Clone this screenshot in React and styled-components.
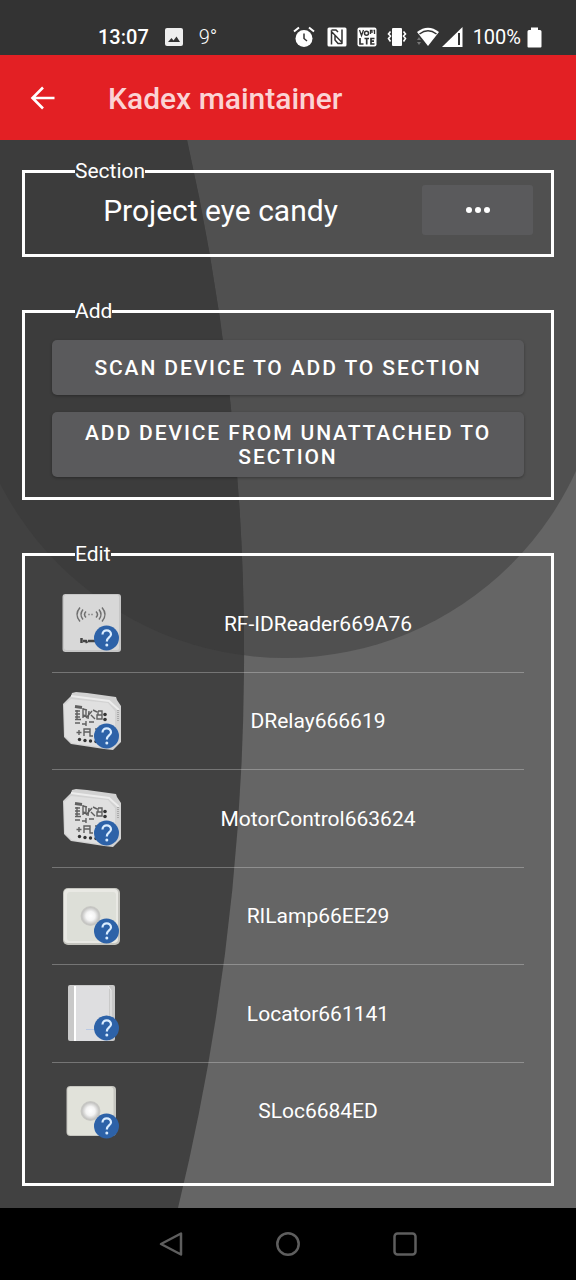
import React from 'react'
import styled, {createGlobalStyle} from 'styled-components'

const GlobalStyle = createGlobalStyle`
  * {
    box-sizing: border-box;
  }

  body {
    margin: 0;
    background: #000;
    color: #fff;
    font-family: Roboto, sans-serif;
  }

  button {
    font-family: inherit;
    color: inherit;
    border: 0;
    padding: 0;
    cursor: pointer;
  }

  svg {
    display: block;
    flex: none;
  }
`

const Page = styled.div`
  min-height: 100vh;
  display: flex;
  flex-direction: column;
`

const StatusBar = styled.div`
  display: flex;
  align-items: center;
  justify-content: space-between;
  height: 55px;
  padding: 19px 34px 0 98px;
  background: #333;
  font-size: 20px;
  line-height: 24px;
`

const StatusGroup = styled.div`
  display: flex;
  align-items: center;
  gap: ${props => props.$gap}px;
`

const Clock = styled.span`
  font-weight: 500;
`

const Temperature = styled.span`
  font-weight: 300;
`

const Header = styled.header`
  display: flex;
  align-items: center;
  gap: 50px;
  height: 85px;
  padding: 0 26px;
  background: #e32024;
`

const BackButton = styled.button`
  background: none;
`

const Title = styled.h1`
  margin: 0;
  padding-top: 2px;
  font-size: 30px;
  line-height: 36px;
  font-weight: 500;
  color: #fbd3d4;
`

const Main = styled.main`
  position: relative;
  flex: 1;
  display: flex;
  flex-direction: column;
  gap: 42px;
  padding: 19px 22px 22px;
  background: #656565;
`

const Backdrop = styled.svg`
  position: absolute;
  inset: 0;
  width: 100%;
  height: 100%;
`

const Group = styled.fieldset`
  position: relative;
  min-width: 0;
  margin: 0;
  padding: ${props => props.$pad};
  border: 3px solid #fff;
`

const Legend = styled.legend`
  margin-left: ${props => props.$indent}px;
  padding: 0;
  font-size: 21px;
  line-height: 24px;
`

const SectionRow = styled.div`
  display: flex;
  align-items: center;
  gap: 24px;
`

const SectionName = styled.div`
  flex: 1;
  padding-top: 2px;
  text-align: center;
  font-size: 30px;
  line-height: 36px;
`

const MoreButton = styled.button`
  display: flex;
  align-items: center;
  justify-content: center;
  width: 111px;
  height: 50px;
  border-radius: 3px;
  background: #5a5a5c;
`

const Actions = styled.div`
  display: flex;
  flex-direction: column;
  gap: 17px;
`

const ActionButton = styled.button`
  padding: 9px 24px 8px;
  min-height: 55px;
  border-radius: 5px;
  background: #5a5a5c;
  box-shadow: 0 1px 3px rgba(0, 0, 0, 0.3);
  font-size: 21px;
  line-height: 24px;
  font-weight: 500;
  letter-spacing: 0.09em;
  text-transform: uppercase;
`

const DeviceList = styled.ul`
  display: grid;
  grid-template-rows: repeat(6, 1fr);
  height: 585px;
  margin: 0;
  padding: 0;
  list-style: none;
`

const Device = styled.li`
  display: flex;
  align-items: center;
  padding: 0 10px;
  border-bottom: 1px solid rgba(255, 255, 255, 0.28);

  &:last-child {
    border-bottom-color: transparent;
  }
`

const DeviceName = styled.span`
  flex: 1;
  padding-top: 1px;
  text-align: center;
  font-size: 21px;
  line-height: 24px;
`

const NavBar = styled.nav`
  display: flex;
  align-items: center;
  justify-content: center;
  gap: 93px;
  height: 72px;
  background: #000;
`

const NavButton = styled.button`
  background: none;
`

const Background = () => (
  <Backdrop viewBox="0 0 576 1068" preserveAspectRatio="none" aria-hidden="true">
    <clipPath id="arc">
      <path d="M-35 0H605V198A320 320 0 0 1 -35 198Z" />
    </clipPath>
    <path d="M-35 0H605V198A320 320 0 0 1 -35 198Z" fill="#505050" />
    <path d="M0 0H187A2350 2350 0 0 1 178 1068H0Z" fill="#414141" />
    <path d="M0 0H187A2350 2350 0 0 1 178 1068H0Z" fill="#3c3c3c" clipPath="url(#arc)" />
  </Backdrop>
)

const StatusIcons = () => (
  <>
    <svg width="24" height="22" viewBox="0 0 24 22" fill="none" stroke="#fff">
      <circle cx="11" cy="12.500" r="8.500" fill="#fff" stroke="none" />
      <path d="M1 5.500L6 1.500M21 5.500L16 1.500" strokeWidth="2" />
      <path d="M11 7.500V12.500L14 15" stroke="#333" strokeWidth="1.500" />
    </svg>
    <svg width="20" height="20" viewBox="0 0 20 20">
      <rect x="0.500" y="0.500" width="19" height="19" rx="1.500" fill="#fff" />
      <path d="M4.500 17.500V4.500L15 15.500V2.500M4.500 3H9L11 5M15 16.500H11L8 13V8" fill="none" stroke="#333" strokeWidth="1.500" />
    </svg>
    <svg width="20" height="20" viewBox="0 0 20 20">
      <rect x="0.500" y="0.500" width="19" height="19" rx="2" fill="#fff" />
      <path d="M2.500 3L4.500 8.500L6.500 3M13.500 7V3.500H15V6M16.500 3.500H17.500V7" fill="none" stroke="#333" strokeWidth="1.300" />
      <circle cx="9.500" cy="6.300" r="2" fill="none" stroke="#333" strokeWidth="1.500" />
      <path d="M3 11V17H6.500M7.500 11.500H12M9.700 11.500V17.500M17.500 11.500H14V17H17.500M14 14.200H17" fill="none" stroke="#333" strokeWidth="1.700" />
    </svg>
    <svg width="20" height="20" viewBox="0 0 20 20">
      <rect x="5" y="1" width="10" height="18" rx="1" fill="#fff" />
      <path d="M3.500 4.500L1.500 7L3.500 9L1.500 11.500L3.500 14.500M16.500 4.500L18.500 7L16.500 9L18.500 11.500L16.500 14.500" fill="none" stroke="#fff" strokeWidth="1.600" />
    </svg>
  </>
)

const SignalIcons = () => (
  <StatusGroup $gap={3}>
    <svg width="22" height="20" viewBox="0 0 22 20">
      <path d="M0 5Q11 -3.500 22 5L11 19Z" fill="#fff" />
      <path d="M2.500 7Q11 0.500 19.500 7" fill="none" stroke="#333" strokeWidth="1.500" />
      <path d="M0 13L2 10L4 13ZM0 15L2 18L4 15Z" fill="#777" />
    </svg>
    <svg width="21" height="20" viewBox="0 0 21 20">
      <path d="M0 20L20.500 0V20Z" fill="#fff" />
      <path d="M17 6V18" stroke="#333" strokeWidth="2" />
    </svg>
  </StatusGroup>
)

const Unknown = () => (
  <>
    <circle cx="44.500" cy="45" r="12.500" fill="#2d62a8" />
    <path d="M40.500 41.500C40.500 36 49 36 49 41.200C49 44.500 44.800 44.500 44.800 48.500" fill="none" stroke="#d9ecff" strokeWidth="2.200" />
    <circle cx="44.800" cy="52" r="1.500" fill="#d9ecff" />
  </>
)

const Reader = () => (
  <>
    <rect x="0.500" y="1" width="58.500" height="58" rx="3" fill="#c6c6c6" />
    <rect x="2" y="2" width="55" height="55" rx="2" fill="#d8d8d8" />
    <g fill="none" stroke="#707070" strokeWidth="1.500">
      <path d="M18 14.500Q12 21.500 18 28.500M21 16.500Q17 21.500 21 26.500M24 18.500Q21 21.500 24 24.500" />
      <path d="M40 14.500Q46 21.500 40 28.500M37 16.500Q41 21.500 37 26.500M34 18.500Q37 21.500 34 24.500" />
      <path d="M26 21.500H32" stroke="#999" strokeDasharray="2 1" />
    </g>
    <path d="M19.500 45V50M21 48H24L25 50M26 48H35" fill="none" stroke="#444" strokeWidth="2.500" />
  </>
)

const Module = () => (
  <>
    <path d="M1 13L9 5L10 2L14 1L25 2L54 6L55 9L59 15V51L51 59L42 58L9 53L2 46Z" fill="#d2d2d2" />
    <path d="M9 5L47 10L57 19" fill="none" stroke="#ececec" strokeWidth="2" />
    <path d="M2 14L9 8L46 12L53 20V50L46 57L10 52L3 45Z" fill="#e0e0e0" />
    <path d="M56 19V31" stroke="#aaa" strokeWidth="2" strokeDasharray="1 1" />
    <g fill="none" stroke="#606060" strokeWidth="1.400">
      <path d="M13 15.500L20 16.500" strokeWidth="3" />
      <path d="M13 20H18M13 23H18M13 26H18M13 28.500H19M15 19V29" />
      <path d="M21 17V27M21 18L25 19M24 19V25L21 24M24 27L30 20M27 20L26 28M29 24L33 28M31 19L35 21" />
      <path d="M36 20H40V28H35V24H40M36 20V24" />
      <path d="M13 32H18M20 33H24M24 30V35M27 31H32" />
      <path d="M17 39V44M14.500 41.500H19.500M22 45V38H28V45H31M22 41H28M33 38H38M35 41H39" />
    </g>
    <g fill="#333">
      <circle cx="43" cy="23.500" r="1.800" />
      <circle cx="43" cy="28.500" r="1.800" />
      <circle cx="17.500" cy="48.500" r="1.700" />
      <circle cx="23" cy="49.500" r="1.700" />
      <circle cx="28.500" cy="50" r="1.700" />
      <circle cx="34" cy="50.500" r="1.700" />
    </g>
  </>
)

const Knob = () => (
  <>
    <defs>
      <radialGradient id="knob">
        <stop offset="0" stopColor="#fff" />
        <stop offset="0.450" stopColor="#f4f4f4" />
        <stop offset="0.850" stopColor="#c4c4c2" />
        <stop offset="1" stopColor="#c9c9c4" />
      </radialGradient>
    </defs>
    <circle cx="28.500" cy="30" r="10" fill="url(#knob)" />
  </>
)

const Lamp = () => (
  <>
    <rect x="1" y="2" width="57" height="57" rx="5" fill="#c4c4be" />
    <rect x="2" y="3" width="54" height="54" rx="4" fill="#e9e9e4" />
    <rect x="5" y="6" width="49" height="49" rx="3" fill="#dddfd8" />
    <Knob />
  </>
)

const Locator = () => (
  <>
    <rect x="6" y="2" width="47" height="56" rx="2" fill="#c9c9c9" />
    <rect x="13" y="3" width="34" height="55" fill="#dedee0" />
    <path d="M13 3V58" stroke="#fff" strokeWidth="2" />
    <path d="M46 3L49 7V57" fill="none" stroke="#eee" strokeWidth="1" />
    <path d="M24 46.500H33" stroke="#b8c8e4" strokeWidth="1" />
  </>
)

const SmallLamp = () => (
  <>
    <rect x="4.500" y="5" width="49.500" height="50" rx="4" fill="#c6c6c0" />
    <rect x="5.500" y="6" width="46" height="48" rx="3" fill="#e1e2da" />
    <Knob />
  </>
)

const devices = [
  {name: 'RF-IDReader669A76', Picture: Reader},
  {name: 'DRelay666619', Picture: Module},
  {name: 'MotorControl663624', Picture: Module},
  {name: 'RILamp66EE29', Picture: Lamp},
  {name: 'Locator661141', Picture: Locator},
  {name: 'SLoc6684ED', Picture: SmallLamp},
]

const App = () => {
  return (
    <Page>
      <GlobalStyle />

      <StatusBar>
        <StatusGroup $gap={16}>
          <Clock>13:07</Clock>
          <svg width="18" height="18" viewBox="0 0 18 18">
            <rect width="18" height="18" rx="2" fill="#eee" />
            <path d="M3 14L6.500 10L8.500 12.500L11.500 8.500L15 14Z" fill="#333" />
          </svg>
          <Temperature>9°</Temperature>
        </StatusGroup>
        <StatusGroup $gap={10}>
          <StatusIcons />
          <SignalIcons />
          <StatusGroup $gap={6}>
            <span>100%</span>
            <svg width="15" height="21" viewBox="0 0 15 21">
              <path d="M4 0.500H11V3H13Q14.500 3 14.500 4.500V19.500Q14.500 20.500 13.500 20.500H1.500Q0.500 20.500 0.500 19.500V4.500Q0.500 3 2 3H4Z" fill="#fff" />
            </svg>
          </StatusGroup>
        </StatusGroup>
      </StatusBar>

      <Header>
        <BackButton aria-label="Back">
          <svg width="32" height="32" viewBox="0 0 32 32" fill="none" stroke="#fff" strokeWidth="2.600">
            <path d="M28.500 16H6.500M17 5.500L6.500 16L17 26.500" />
          </svg>
        </BackButton>
        <Title>Kadex maintainer</Title>
      </Header>

      <Main>
        <Background />

        <Group $pad="2px 18px 19px">
          <Legend $indent={32}>Section</Legend>
          <SectionRow>
            <SectionName>Project eye candy</SectionName>
            <MoreButton aria-label="Choose section">
              <svg width="26" height="8" viewBox="0 0 26 8" fill="#fff">
                <circle cx="4" cy="4" r="3" />
                <circle cx="13" cy="4" r="3" />
                <circle cx="22" cy="4" r="3" />
              </svg>
            </MoreButton>
          </SectionRow>
        </Group>

        <Group $pad="17px 27px 20px">
          <Legend $indent={23}>Add</Legend>
          <Actions>
            <ActionButton>Scan device to add to section</ActionButton>
            <ActionButton>Add device from unattached to section</ActionButton>
          </Actions>
        </Group>

        <Group $pad="9px 27px 23px">
          <Legend $indent={23}>Edit</Legend>
          <DeviceList>
            {devices.map(({name, Picture}) => (
              <Device key={name}>
                <svg width="60" height="60" viewBox="0 0 60 60" aria-hidden="true">
                  <Picture />
                  <Unknown />
                </svg>
                <DeviceName>{name}</DeviceName>
              </Device>
            ))}
          </DeviceList>
        </Group>
      </Main>

      <NavBar>
        <NavButton aria-label="Back">
          <svg width="24" height="26" viewBox="0 0 24 26" fill="none" stroke="#5e5e5e" strokeWidth="2.500" strokeLinejoin="round">
            <path d="M22 2.500V23.500L2 13Z" />
          </svg>
        </NavButton>
        <NavButton aria-label="Home">
          <svg width="24" height="24" viewBox="0 0 24 24" fill="none" stroke="#5e5e5e" strokeWidth="2.500">
            <circle cx="12" cy="12" r="10.700" />
          </svg>
        </NavButton>
        <NavButton aria-label="Recent apps">
          <svg width="24" height="24" viewBox="0 0 24 24" fill="none" stroke="#5e5e5e" strokeWidth="2.500">
            <rect x="1.500" y="1.500" width="21" height="21" rx="3" />
          </svg>
        </NavButton>
      </NavBar>
    </Page>
  )
}

export default App
